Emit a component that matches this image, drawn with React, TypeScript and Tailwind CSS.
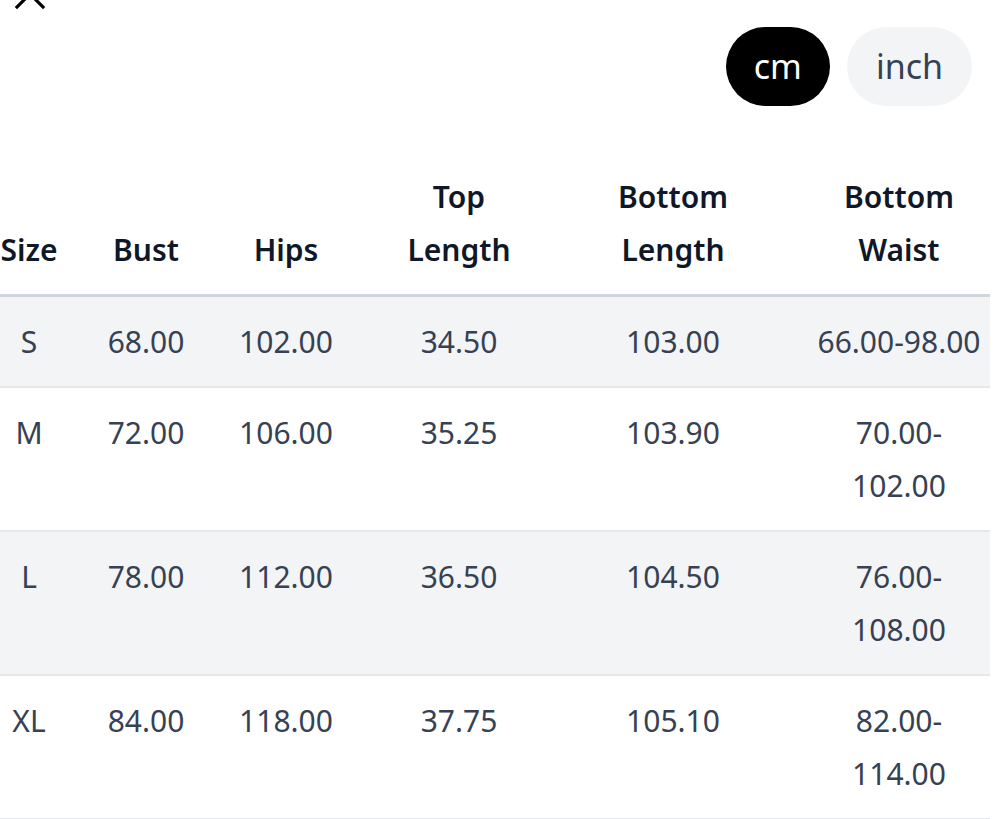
import React from "react";

const rows = [
  { size: "S", bust: "68.00", hips: "102.00", top: "34.50", bottom: "103.00", waist: ["66.00-98.00"] },
  { size: "M", bust: "72.00", hips: "106.00", top: "35.25", bottom: "103.90", waist: ["70.00-", "102.00"] },
  { size: "L", bust: "78.00", hips: "112.00", top: "36.50", bottom: "104.50", waist: ["76.00-", "108.00"] },
  { size: "XL", bust: "84.00", hips: "118.00", top: "37.75", bottom: "105.10", waist: ["82.00-", "114.00"] },
];

export default function App() {
  return (
    <div
      className="w-[1000px] h-[819px] overflow-hidden bg-white"
      style={{ fontFamily: '"Noto Sans", "Open Sans", sans-serif' }}
    >
      <div className="flex h-0 items-start overflow-visible">
        <svg
          width="40"
          height="40"
          viewBox="0 0 40 40"
          className="ml-[10px] -translate-y-[26px] block shrink-0"
          fill="none"
          stroke="#000"
          strokeWidth="3.2"
          strokeLinecap="square"
        >
          <line x1="7" y1="7" x2="33" y2="33" />
          <line x1="33" y1="7" x2="7" y2="33" />
        </svg>
      </div>
      <div className="flex justify-end gap-[17px] pt-[27px] pr-[28px]">
        <button className="h-[79px] rounded-full bg-black px-[28px] text-[34px] text-white">cm</button>
        <button className="h-[79px] rounded-full bg-gray-100 px-[29px] text-[34px] text-gray-700">inch</button>
      </div>
      <table className="mt-[46px] w-[990px] table-fixed border-collapse text-[30px] leading-[53px]">
        <colgroup>
          <col className="w-[100px]" />
          <col className="w-[92px]" />
          <col className="w-[188px]" />
          <col className="w-[158px]" />
          <col className="w-[270px]" />
          <col className="w-[182px]" />
        </colgroup>
        <thead>
          <tr className="border-b-[3px] border-gray-300 align-bottom text-gray-900">
            <th className="pr-[42px] py-[18px] text-center font-semibold">Size</th>
            <th className="py-[18px] text-center font-semibold">Bust</th>
            <th className="py-[18px] text-center font-semibold">Hips</th>
            <th className="py-[18px] text-center font-semibold">
              Top
              <br />
              Length
            </th>
            <th className="py-[18px] text-center font-semibold">
              Bottom
              <br />
              Length
            </th>
            <th className="py-[18px] text-center font-semibold">
              Bottom
              <br />
              Waist
            </th>
          </tr>
        </thead>
        <tbody className="text-gray-700">
          {rows.map((r, i) => (
            <tr
              key={r.size}
              className={`border-b-2 border-gray-200 align-top ${i % 2 === 0 ? "bg-gray-100" : "bg-white"}`}
            >
              <td className="pr-[42px] py-[18px] text-center">{r.size}</td>
              <td className="py-[18px] text-center">{r.bust}</td>
              <td className="py-[18px] text-center">{r.hips}</td>
              <td className="py-[18px] text-center">{r.top}</td>
              <td className="py-[18px] text-center">{r.bottom}</td>
              <td className="py-[18px] text-center">
                {r.waist.map((w, j) => (
                  <div key={j}>{w}</div>
                ))}
              </td>
            </tr>
          ))}
        </tbody>
      </table>
    </div>
  );
}
